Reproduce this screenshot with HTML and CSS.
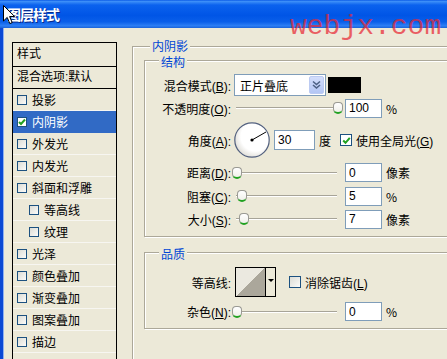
FILE: index.html
```html
<!DOCTYPE html>
<html lang="zh-CN">
<head>
    <meta charset="UTF-8">
    <title>图层样式</title>
    <link rel="stylesheet" href="styles.css">
</head>
<body>
<div class="window">
    <div class="titlebar"><span class="title">图层样式</span></div>

    <div class="dialog">
        <ul class="styles-list">
            <li class="list-head">样式</li>
            <li class="list-blend">混合选项:默认</li>
            <li class="list-item"><span class="check"></span>投影</li>
            <li class="list-item selected"><span class="check on"><svg width="8" height="8" viewBox="0 0 8 8"><path d="M1 4 L3 6 L7 1.5" fill="none" stroke="#21a121" stroke-width="2"/></svg></span>内阴影</li>
            <li class="list-item"><span class="check"></span>外发光</li>
            <li class="list-item"><span class="check"></span>内发光</li>
            <li class="list-item"><span class="check"></span>斜面和浮雕</li>
            <li class="list-item sub"><span class="check"></span>等高线</li>
            <li class="list-item sub"><span class="check"></span>纹理</li>
            <li class="list-item"><span class="check"></span>光泽</li>
            <li class="list-item"><span class="check"></span>颜色叠加</li>
            <li class="list-item"><span class="check"></span>渐变叠加</li>
            <li class="list-item"><span class="check"></span>图案叠加</li>
            <li class="list-item"><span class="check"></span>描边</li>
            <li class="list-item"></li>
        </ul>

        <div class="panel">
            <div class="group outer">
                <div class="group-title">内阴影</div>

                <div class="group inner">
                    <div class="group-title">结构</div>
                    <div class="rows">
                        <div class="row h24">
                            <label>混合模式(<u>B</u>):</label>
                            <div class="select">
                                <span class="select-text">正片叠底</span>
                                <span class="select-btn"><svg width="9" height="10" viewBox="0 0 9 10"><path d="M1 1.5 L4.5 4.5 L8 1.5 M1 5 L4.5 8 L8 5" fill="none" stroke="#4d6185" stroke-width="1.6"/></svg></span>
                            </div>
                            <span class="swatch"></span>
                        </div>
                        <div class="row h22">
                            <label>不透明度(<u>O</u>):</label>
                            <div class="slider"><span class="track"></span><span class="thumb" style="left: 101px"></span></div>
                            <input class="num" type="text" value="100">
                            <span class="unit">%</span>
                        </div>
                        <div class="row h42">
                            <label>角度(<u>A</u>):</label>
                            <svg class="dial" width="36" height="36" viewBox="0 0 36 36">
                                <defs>
                                    <radialGradient id="dialFill" cx="0.6" cy="0.4" r="0.7">
                                        <stop offset="0.6" stop-color="#ffffff"/>
                                        <stop offset="1" stop-color="#d6d4cc"/>
                                    </radialGradient>
                                </defs>
                                <circle cx="18" cy="18" r="17.2" fill="url(#dialFill)" stroke="#53617f" stroke-width="1.2"/>
                                <line x1="18" y1="18" x2="32" y2="10" stroke="#000" stroke-width="1"/>
                                <circle cx="18" cy="18" r="1.6" fill="#000"/>
                            </svg>
                            <input class="num wide" type="text" value="30">
                            <span class="unit">度</span>
                            <span class="check big on global"><svg width="9" height="9" viewBox="0 0 9 9"><path d="M1.2 4.5 L3.5 6.8 L7.8 1.8" fill="none" stroke="#21a121" stroke-width="2"/></svg></span>
                            <span class="check-label">使用全局光(<u>G</u>)</span>
                        </div>
                        <div class="row h23">
                            <label>距离(<u>D</u>):</label>
                            <div class="slider"><span class="track"></span><span class="thumb" style="left: 0px"></span></div>
                            <input class="num" type="text" value="0">
                            <span class="unit">像素</span>
                        </div>
                        <div class="row h24">
                            <label>阻塞(<u>C</u>):</label>
                            <div class="slider"><span class="track"></span><span class="thumb" style="left: 5px"></span></div>
                            <input class="num" type="text" value="5">
                            <span class="unit">%</span>
                        </div>
                        <div class="row h22">
                            <label>大小(<u>S</u>):</label>
                            <div class="slider"><span class="track"></span><span class="thumb" style="left: 7px"></span></div>
                            <input class="num" type="text" value="7">
                            <span class="unit">像素</span>
                        </div>
                    </div>
                </div>

                <div class="group inner quality">
                    <div class="group-title">品质</div>
                    <div class="rows q-rows">
                        <div class="row h36">
                            <label>等高线:</label>
                            <div class="contour">
                                <span class="contour-preview"></span>
                                <span class="contour-arrow"></span>
                            </div>
                            <span class="check big antialias"></span>
                            <span class="check-label">消除锯齿(<u>L</u>)</span>
                        </div>
                        <div class="row h23">
                            <label>杂色(<u>N</u>):</label>
                            <div class="slider"><span class="track"></span><span class="thumb" style="left: 0px"></span></div>
                            <input class="num" type="text" value="0">
                            <span class="unit">%</span>
                        </div>
                    </div>
                </div>
            </div>
        </div>
    </div>

    <svg class="cursor" width="13" height="20" viewBox="0 0 13 20">
        <path d="M0.5 0.5 L0.5 16 L4.2 12.4 L6.8 18.6 L9.2 17.6 L6.6 11.5 L11.6 11.5 Z" fill="#fff" stroke="#000" stroke-width="1"/>
    </svg>
    <div class="watermark">webjx.com</div>
</div>
</body>
</html>
```

FILE: styles.css
```css
body {
    margin: 0;
    background-color: #ece9d8; /* XP dialog face */
    font-family: "Liberation Sans", "Noto Sans CJK SC", sans-serif;
    font-size: 12px;
    color: #000;
    overflow: hidden;
}

.window {
    position: relative;
    height: 359px;
    overflow: hidden;
}

.titlebar {
    height: 28px;
    display: flex;
    align-items: center;
    padding-left: 7px;
    background: linear-gradient(to bottom, #0a5ae6 0%, #3d8ff8 5%, #0b62ee 18%, #0055e6 55%, #0a5fe9 78%, #2d7ff5 92%, #1a63d8 100%);
}

.title {
    color: #fff;
    font-family: "Noto Sans CJK SC", sans-serif;
    font-weight: bold;
    font-size: 14px;
    letter-spacing: -1px;
    text-shadow: 1px 1px #0a2a8a;
}

.dialog {
    display: flex;
    gap: 15px;
    height: 331px;
    box-sizing: border-box;
    padding: 14px 0 0 9px;
    border-left: 3px solid #0a48d4;
    box-shadow: inset 1px 0 #8fb0f0;
    overflow: hidden;
}

/* left list of effects */
.styles-list {
    list-style: none;
    margin: 0;
    padding: 0;
    width: 103px;
    flex: none;
    align-self: flex-start;
    border: 1px solid #000;
    border-bottom: none;
}

.list-head {
    height: 23px;
    line-height: 23px;
    padding-left: 4px;
    border-bottom: 1px solid #000;
}

.list-blend {
    height: 21px;
    line-height: 21px;
    padding-left: 4px;
    border-bottom: 1px solid #000;
}

.list-item {
    height: 21px;
    display: flex;
    align-items: center;
    gap: 5px;
    padding-left: 4px;
    border-bottom: 1px solid #f7f6f1;
}

.list-item.sub {
    padding-left: 16px;
}

.list-item.selected {
    background-color: #316ac5;
    border-bottom-color: #316ac5;
    color: #fff;
}

.check {
    width: 10px;
    height: 10px;
    flex: none;
    box-sizing: border-box;
    border: 1px solid #1c5180;
    background: linear-gradient(135deg, #dcdcd5, #fbfbf9);
    display: flex;
    align-items: center;
    justify-content: center;
}

.check.on {
    background: #fff;
}

.check.big {
    width: 12px;
    height: 12px;
}

/* right side */
.panel {
    flex: 1;
    padding-top: 4px;
}

.group {
    border: 1px solid #aca899;
    border-right: none;
    box-shadow: inset 1px 1px #fff, 1px 1px #fff;
}

.outer {
    height: 400px;
    border-bottom: none;
    padding-left: 11px;
}

.group-title {
    width: fit-content;
    padding: 0 2px;
    line-height: 14px;
    background-color: #ece9d8;
    color: #0046d5;
    font-family: "Noto Sans CJK SC", sans-serif;
}

.outer > .group-title {
    margin: -8px 0 0 6px;
}

.inner {
    margin-top: 7px;
    padding-bottom: 6px;
}

.inner > .group-title {
    margin: -6px 0 0 14px;
}

.quality {
    margin-top: 15px;
    padding-bottom: 5px;
}

.rows {
    margin-top: 4px;
}

.q-rows {
    margin-top: 3px;
}

.row {
    display: flex;
    align-items: center;
}

.h22 { height: 22px; }
.h23 { height: 23px; }
.h24 { height: 24px; }
.h36 { height: 36px; }
.h42 { height: 42px; }

.row label {
    width: 86px;
    flex: none;
    text-align: right;
    white-space: nowrap;
}

.select {
    margin-left: 3px;
    width: 92px;
    height: 22px;
    box-sizing: border-box;
    border: 1px solid #7f9db9;
    background: #fff;
    display: flex;
    align-items: center;
    padding: 1px;
}

.select-text {
    flex: 1;
    padding-left: 4px;
}

.select-btn {
    width: 15px;
    height: 18px;
    box-sizing: border-box;
    border: 1px solid #bccbf2;
    border-radius: 2px;
    background: linear-gradient(to bottom, #d3defb, #b3c6f4);
    display: flex;
    align-items: center;
    justify-content: center;
}

.swatch {
    margin-left: 2px;
    width: 33px;
    height: 16px;
    background: #000;
}

.slider {
    position: relative;
    margin-left: 1px;
    width: 110px;
    height: 14px;
    display: flex;
    align-items: center;
    padding: 0 5px 0 4px;
    box-sizing: border-box;
}

.track {
    flex: 1;
    height: 0;
    border-top: 1px solid #a7a498;
    border-bottom: 1px solid #fff;
}

.thumb {
    position: absolute;
    top: 1px;
    width: 10px;
    height: 12px;
    box-sizing: border-box;
    border: 1px solid #9a9a94;
    border-bottom: 2px solid #21a121;
    border-radius: 4px 4px 5px 5px;
    background: linear-gradient(to bottom, #fff, #f0f0ea);
}

.num {
    margin: 0 0 0 3px;
    width: 37px;
    height: 19px;
    box-sizing: border-box;
    border: 1px solid #7f9db9;
    padding: 0 0 0 3px;
    font: inherit;
    color: #000;
    background: #fff;
}

.num.wide {
    margin-left: 4px;
    width: 41px;
    height: 20px;
}

.unit {
    margin-left: 4px;
    font-family: "Noto Sans CJK SC", sans-serif;
}

.dial {
    margin-left: 3px;
    flex: none;
}

.global {
    margin-left: 9px;
}

.check-label {
    margin-left: 4px;
    white-space: nowrap;
}

.contour {
    margin-left: 4px;
    width: 41px;
    height: 30px;
    box-sizing: border-box;
    border: 1px solid #000;
    display: flex;
}

.contour-preview {
    width: 29px;
    border-right: 1px solid #000;
    background: linear-gradient(to top left, #aba79b 50%, #ebe9e0 50%);
}

.contour-arrow {
    flex: 1;
    display: flex;
    justify-content: center;
    padding-top: 11px;
    box-sizing: border-box;
}

.contour-arrow::after {
    content: "";
    width: 0;
    height: 0;
    border-left: 3px solid transparent;
    border-right: 3px solid transparent;
    border-top: 3px solid #000;
}

.antialias {
    margin-left: 13px;
}

/* overlays */
.cursor {
    position: absolute;
    left: 3px;
    top: 5px;
}

.watermark {
    position: absolute;
    left: 290px;
    top: 13px;
    font-family: "Liberation Mono", monospace;
    font-size: 28px;
    line-height: 28px;
    color: rgba(232, 40, 52, 0.72);
}
```
